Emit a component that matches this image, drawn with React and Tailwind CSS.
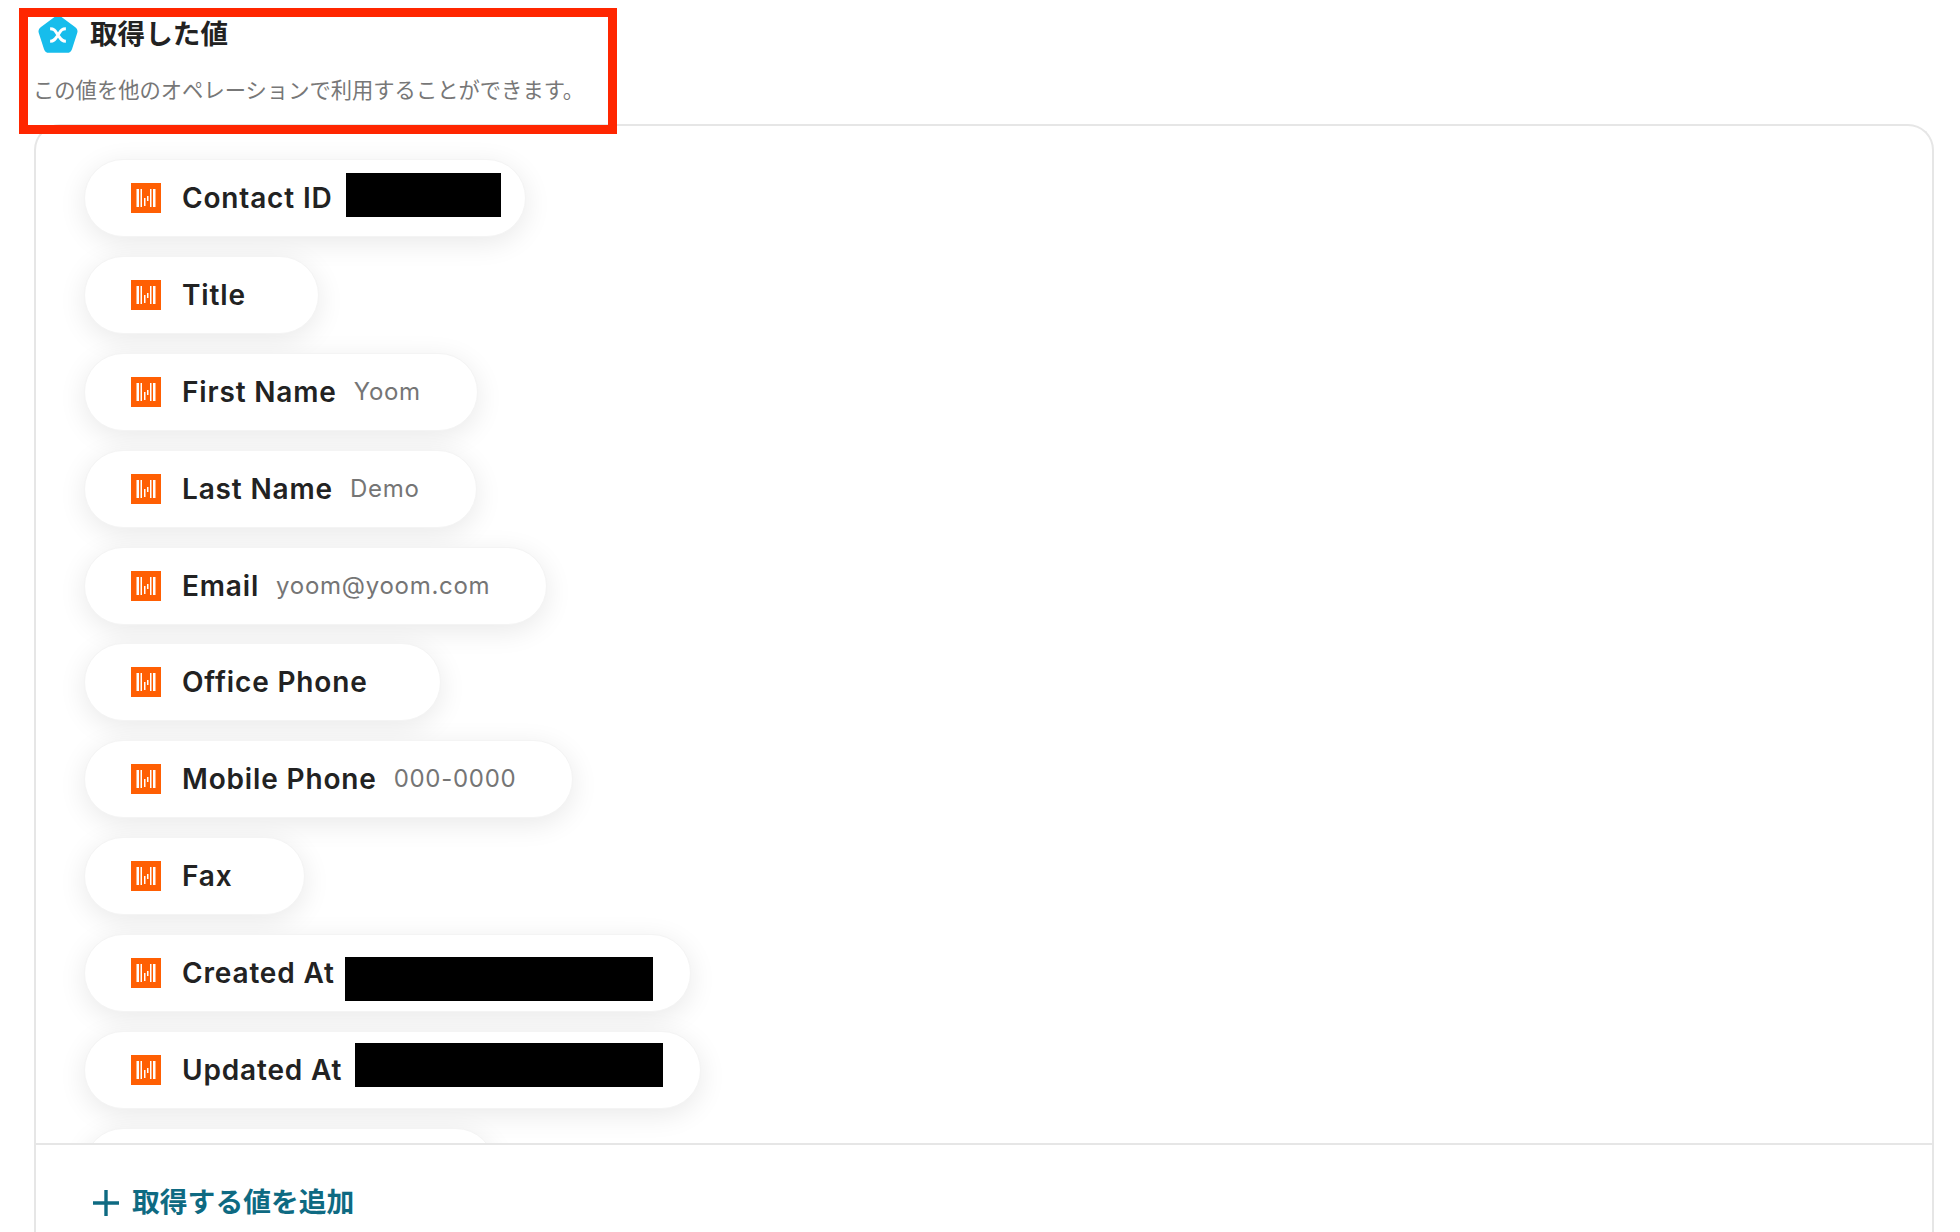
import React from "react";

const fuente = { fontFamily: '"Inter", "Noto Sans CJK JP", sans-serif' };

const campos = [
  { nombre: "Contact ID", tapado: "w-[155px] ml-[13px] -mt-[7px] mr-[-13px]" },
  { nombre: "Title" },
  { nombre: "First Name", valor: "Yoom" },
  { nombre: "Last Name", valor: "Demo" },
  { nombre: "Email", valor: "yoom@yoom.com" },
  { nombre: "Office Phone" },
  { nombre: "Mobile Phone", valor: "000-0000" },
  { nombre: "Fax" },
  { nombre: "Created At", tapado: "w-[308px] ml-[10px] mt-[11px]" },
  { nombre: "Updated At", tapado: "w-[308px] ml-[13px] -mt-[11px]" },
];

const IconoApp = () => (
  <svg width="30" height="30" viewBox="0 0 30 30" className="shrink-0">
    <rect width="30" height="30" fill="#ff5f03" />
    <g fill="#fff">
      <rect x="5.5" y="6" width="2.5" height="18" />
      <rect x="9.5" y="6" width="1.5" height="18" />
      <rect x="13" y="15" width="1.5" height="8" />
      <rect x="16" y="13" width="1.5" height="5" />
      <rect x="19" y="6" width="1.5" height="18" />
      <rect x="22" y="6" width="2.5" height="18" />
    </g>
  </svg>
);

const IconoValor = () => (
  <svg width="42" height="40" viewBox="0 0 40 38" className="shrink-0">
    <path
      d="M17 1.5a5 5 0 0 1 6 0l13.5 10a5 5 0 0 1 1.8 5.5l-5 15.5a5 5 0 0 1-4.8 3.5h-17a5 5 0 0 1-4.8-3.5l-5-15.5a5 5 0 0 1 1.8-5.5z"
      fill="#17bdec"
    />
    <path
      d="M12.5 13c4.5 0 5 2.500 7.500 6s3.500 6 7.500 6M27.500 13c-4.500 0-5 2.500-7.500 6s-3.500 6-7.500 6"
      fill="none"
      stroke="#fff"
      strokeWidth="2.8"
    />
  </svg>
);

const Campo = ({ campo }) => (
  <div className="flex h-[78px] w-fit shrink-0 items-center rounded-full border border-[#f4f4f4] bg-white pl-[46px] pr-[37px] shadow-[0_6px_28px_rgba(0,0,0,0.09)]">
    <IconoApp />
    <span className="ml-[21px] text-[28px] font-semibold tracking-[0.03em] text-[#222222]">
      {campo.nombre}
    </span>
    {campo.valor && (
      <span className="ml-[17px] pr-[19px] text-[24px] tracking-[0.03em] text-[#757575]">
        {campo.valor}
      </span>
    )}
    {campo.tapado && <span className={`h-[44px] bg-black ${campo.tapado}`} />}
    {!campo.valor && !campo.tapado && <span className="w-[35px]" />}
  </div>
);

export default function App() {
  return (
    <div className="relative flex h-[1232px] flex-col overflow-hidden bg-white" style={fuente}>
      {/* recuadro rojo de la captura */}
      <div className="absolute left-[19px] top-[8px] z-10 h-[126px] w-[598px] border-[9px] border-[#ff2600]" />

      <div className="flex h-[124px] shrink-0 flex-col pl-[33px]">
        <div className="flex h-[68px] items-start gap-[11px] pl-[4px] pt-[15px]">
          <IconoValor />
          <h2 className="-mt-[1px] text-[27.6px] font-bold leading-[40px] text-[#222222]">取得した値</h2>
        </div>
        <p className="text-[21.3px] leading-[44px] text-[#777777]">
          この値を他のオペレーションで利用することができます。
        </p>
      </div>

      <div className="ml-[34px] mr-[26px] flex min-h-0 flex-1 flex-col rounded-t-[26px] border-2 border-b-0 border-[#e6e6e6]">
        <div className="flex h-[1017px] shrink-0 flex-col gap-[18.9px] overflow-hidden pl-[48px] pt-[33px]">
          {campos.map((campo) => (
            <Campo key={campo.nombre} campo={campo} />
          ))}
          {/* la siguiente fila queda cortada por el borde de la lista */}
          <div className="h-[78px] w-[411px] shrink-0 rounded-full border border-[#f4f4f4] bg-white shadow-[0_6px_28px_rgba(0,0,0,0.09)]" />
        </div>
        <div className="flex flex-1 items-center gap-[12px] border-t-2 border-[#e6e6e6] pl-[56px] pt-[28px]">
          <svg width="28" height="28" viewBox="0 0 28 28" className="shrink-0">
            <path d="M14 1v26M1 14h26" stroke="#0e6a82" strokeWidth="3.4" />
          </svg>
          <span className="text-[27.8px] font-semibold text-[#0e6a82]">取得する値を追加</span>
        </div>
      </div>
    </div>
  );
}
